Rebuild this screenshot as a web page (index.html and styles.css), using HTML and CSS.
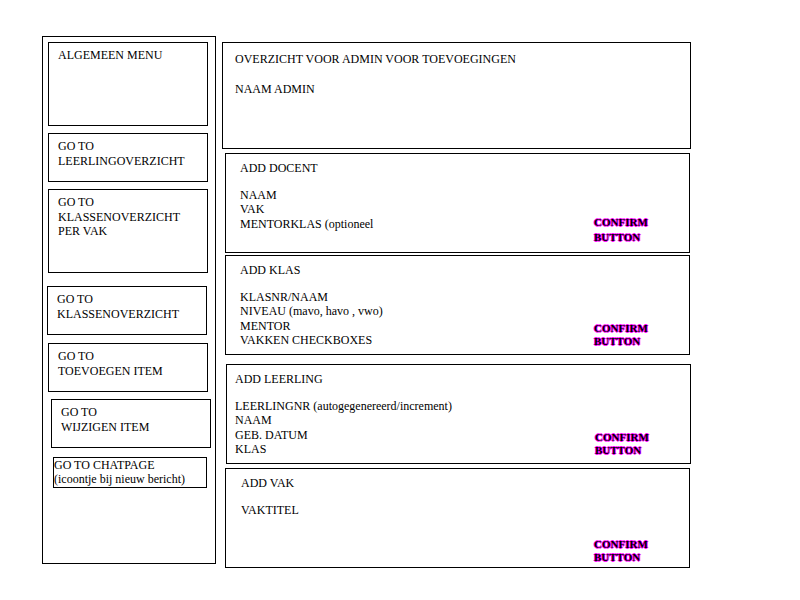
FILE: index.html
```html
<!DOCTYPE html>
<html lang="nl">
<head>
<meta charset="utf-8">
<title>Admin overzicht</title>
<link rel="stylesheet" href="styles.css">
</head>
<body>
<div class="page">
  <nav class="sidebar">
    <div class="nav-box nav-tall">ALGEMEEN MENU</div>
    <div class="nav-box nav-b2">GO TO<br>LEERLINGOVERZICHT</div>
    <div class="nav-box nav-tall nav-b3">GO TO<br>KLASSENOVERZICHT<br>PER VAK</div>
    <div class="nav-box nav-b4">GO TO<br>KLASSENOVERZICHT</div>
    <div class="nav-box nav-b5">GO TO<br>TOEVOEGEN ITEM</div>
    <div class="nav-box nav-b6">GO TO<br>WIJZIGEN ITEM</div>
    <div class="nav-box nav-b7">GO TO CHATPAGE<br>(icoontje bij nieuw bericht)</div>
  </nav>
  <main class="main">
    <section class="overview">
      <p class="title">OVERZICHT VOOR ADMIN VOOR TOEVOEGINGEN</p>
      <p class="admin">NAAM ADMIN</p>
    </section>
    <section class="card card-docent">
      <div class="fields">
        <p class="title">ADD DOCENT</p>
        <p class="list">NAAM<br>VAK<br>MENTORKLAS (optioneel</p>
      </div>
      <div class="confirm">CONFIRM<br>BUTTON</div>
    </section>
    <section class="card card-klas">
      <div class="fields">
        <p class="title">ADD KLAS</p>
        <p class="list">KLASNR/NAAM<br>NIVEAU (mavo, havo , vwo)<br>MENTOR<br>VAKKEN CHECKBOXES</p>
      </div>
      <div class="confirm">CONFIRM<br>BUTTON</div>
    </section>
    <section class="card card-leerling">
      <div class="fields">
        <p class="title">ADD LEERLING</p>
        <p class="list">LEERLINGNR (autogegenereerd/increment)<br>NAAM<br>GEB. DATUM<br>KLAS</p>
      </div>
      <div class="confirm">CONFIRM<br>BUTTON</div>
    </section>
    <section class="card card-vak">
      <div class="fields">
        <p class="title">ADD VAK</p>
        <p class="list">VAKTITEL</p>
      </div>
      <div class="confirm">CONFIRM<br>BUTTON</div>
    </section>
  </main>
</div>
</body>
</html>
```

FILE: styles.css
```css
* { box-sizing: border-box; }

html, body {
  margin: 0;
  padding: 0;
  background: #fff;
}

body {
  font-family: "Liberation Serif", "Times New Roman", serif;
  font-size: 12px;
  line-height: 14.5px;
  color: #000;
}

p { margin: 0; }

.page {
  display: flex;
  align-items: flex-start;
  padding-left: 42px;
}

/* Sidebar */
.sidebar {
  display: flex;
  flex-direction: column;
  align-items: flex-start;
  width: 174px;
  height: 528px;
  margin-top: 36px;
  padding: 5px;
  border: 1px solid #000;
}

.nav-box {
  width: 160px;
  height: 49px;
  padding: 5px 9px;
  border: 1px solid #000;
}

.nav-tall { height: 84px; }
.nav-b2 { margin-top: 7px; }
.nav-b3 { margin-top: 7px; }
.nav-b4 { margin-top: 13px; margin-left: -1px; }
.nav-b5 { margin-top: 8px; }
.nav-b6 { margin-top: 7px; margin-left: 3px; }
.nav-b7 {
  margin-top: 9px;
  margin-left: 5px;
  width: 154px;
  height: 31px;
  padding: 0;
  line-height: 14px;
}

/* Main */
.main {
  display: flex;
  flex-direction: column;
  align-items: flex-start;
  margin-top: 42px;
  margin-left: 6px;
}

.overview {
  width: 469px;
  height: 107px;
  padding: 9px 12px;
  border: 1px solid #000;
}

.overview .admin { margin-top: 15px; }

.card {
  display: grid;
  grid-template-columns: 1fr 95px;
  width: 465px;
  height: 100px;
  margin-left: 3px;
  padding: 7px 0 7px 14px;
  border: 1px solid #000;
}

.card .list { margin-top: 12px; }

.card-docent { margin-top: 4px; padding-bottom: 7px; }
.card-klas { margin-top: 2px; }
.card-leerling { margin-top: 9px; margin-left: 4px; padding-left: 8px; }
.card-vak { margin-top: 4px; padding-left: 15px; padding-bottom: 3px; }

.confirm {
  align-self: end;
  font-size: 11px;
  font-weight: bold;
  line-height: 13px;
  color: #000;
  text-shadow: -1px 0 #f0f, 1px 0 #f0f, 0 -1px #f0f, 0 1px #f0f;
}

.card-docent .confirm { line-height: 15px; }
```
